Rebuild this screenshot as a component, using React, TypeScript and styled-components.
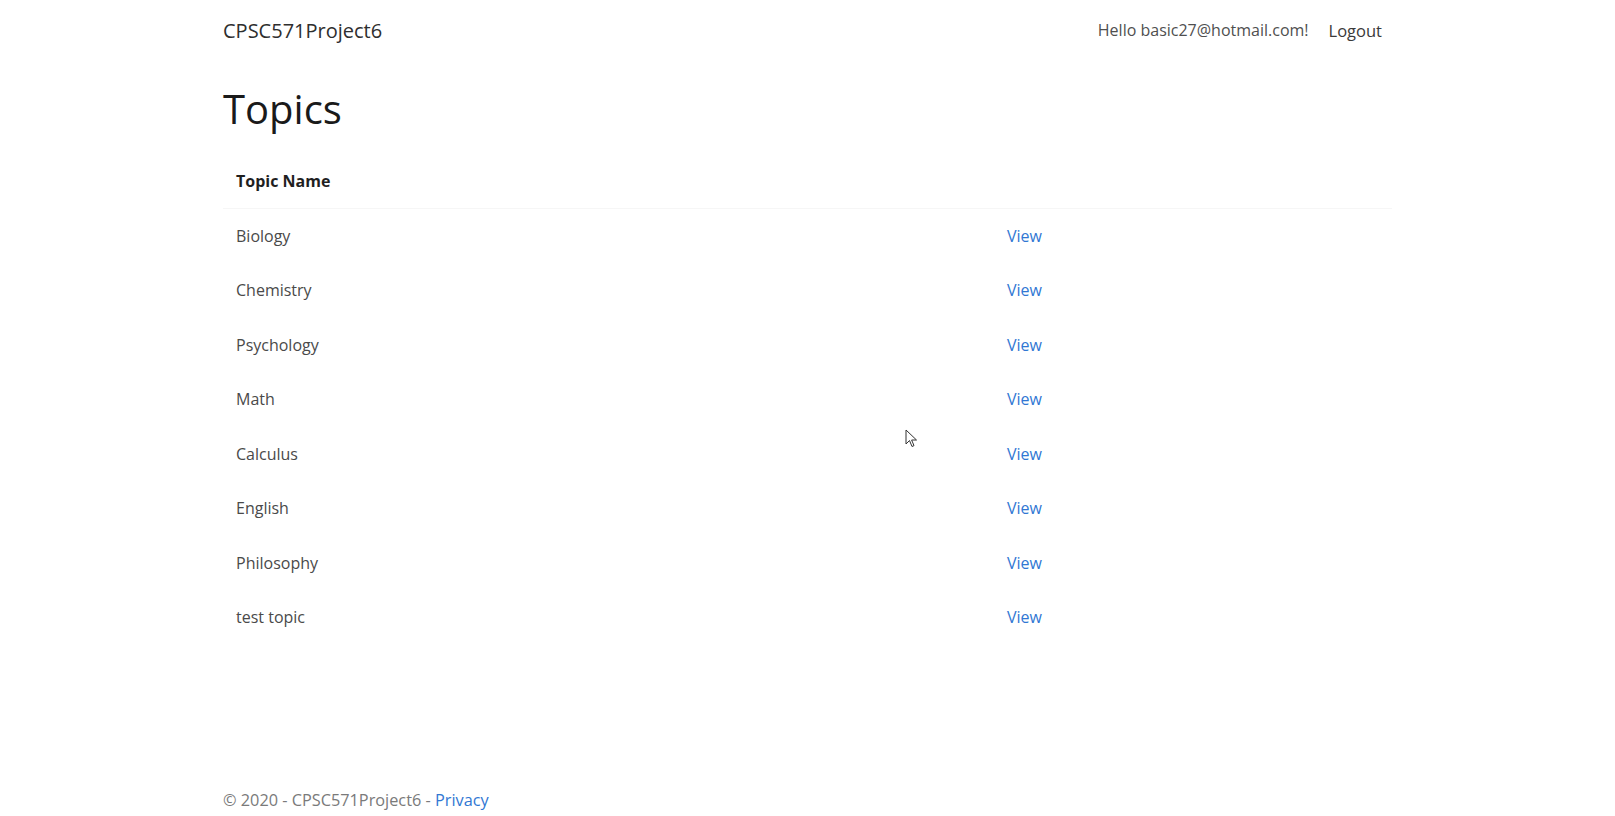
import React from "react";
import styled, { createGlobalStyle } from "styled-components";

const topics = [
  "Biology",
  "Chemistry",
  "Psychology",
  "Math",
  "Calculus",
  "English",
  "Philosophy",
  "test topic",
];

const GlobalStyle = createGlobalStyle`
  html, body {
    margin: 0;
    padding: 0;
    background: #ffffff;
  }
  body {
    font-family: "Open Sans", "Noto Sans", sans-serif;
    font-size: 16px;
    color: #212529;
  }
  * {
    box-sizing: border-box;
  }
`;

const Page = styled.div`
  position: relative;
  min-height: 100vh;
  display: flex;
  flex-direction: column;
`;

const Container = styled.div`
  width: 1169px;
  margin: 0 auto;
`;

const NavBar = styled.header`
  height: 60px;
  display: flex;
  align-items: center;
  justify-content: space-between;
`;

const Brand = styled.a`
  font-size: 20px;
  color: #2e2e2e;
  text-decoration: none;
  margin-top: 1px;
`;

const NavList = styled.nav`
  display: flex;
  align-items: center;
`;

const NavItem = styled.span<{ $dark?: boolean }>`
  padding: 0 10px;
  color: ${(p) => (p.$dark ? "#3a3a3a" : "#4f4f4f")};
  font-size: ${(p) => (p.$dark ? "16.5px" : "16px")};
`;

const Main = styled.main`
  flex: 1;
`;

const Title = styled.h1`
  margin: 25px 0 21px;
  font-size: 40px;
  font-weight: 500;
  line-height: 48px;
  color: #1a1a1a;
`;

const Table = styled.div`
  display: grid;
  grid-template-columns: 771px 1fr;
`;

const Cell = styled.div<{ $head?: boolean }>`
  height: 54.5px;
  display: flex;
  align-items: center;
  padding: 0 13px;
  font-weight: ${(p) => (p.$head ? 700 : 400)};
  color: ${(p) => (p.$head ? "#1f1f1f" : "#4a4a4a")};
  border-bottom: ${(p) => (p.$head ? "1px solid #f6f6f6" : "none")};
`;

const Link = styled.a`
  color: #3177d3;
  text-decoration: none;
`;

const Footer = styled.footer`
  height: 32px;
  line-height: 32px;
  font-size: 16.3px;
  color: #7a7a7a;
`;

const Cursor = styled.svg`
  position: absolute;
  left: 905px;
  top: 429px;
`;

export default function App() {
  return (
    <>
      <GlobalStyle />
      <Page>
        <Container>
          <NavBar>
            <Brand href="#">CPSC571Project6</Brand>
            <NavList>
              <NavItem>Hello basic27@hotmail.com!</NavItem>
              <NavItem $dark>Logout</NavItem>
            </NavList>
          </NavBar>
        </Container>

        <Main>
          <Container>
            <Title>Topics</Title>
            <Table>
              <Cell $head>Topic Name</Cell>
              <Cell $head />
              {topics.map((t) => (
                <React.Fragment key={t}>
                  <Cell>{t}</Cell>
                  <Cell>
                    <Link href="#">View</Link>
                  </Cell>
                </React.Fragment>
              ))}
            </Table>
          </Container>
        </Main>

        <Footer>
          <Container>
            © 2020 - CPSC571Project6 - <Link href="#">Privacy</Link>
          </Container>
        </Footer>

        {/* mouse pointer visible in the capture */}
        <Cursor width="13" height="19" viewBox="0 0 13 19">
          <path
            d="M1 1 L1 15 L4.5 11.5 L7 17.5 L9 16.6 L6.6 11 L11.5 11 Z"
            fill="#ffffff"
            stroke="#333333"
            strokeWidth="1"
            strokeLinejoin="round"
          />
        </Cursor>
      </Page>
    </>
  );
}
